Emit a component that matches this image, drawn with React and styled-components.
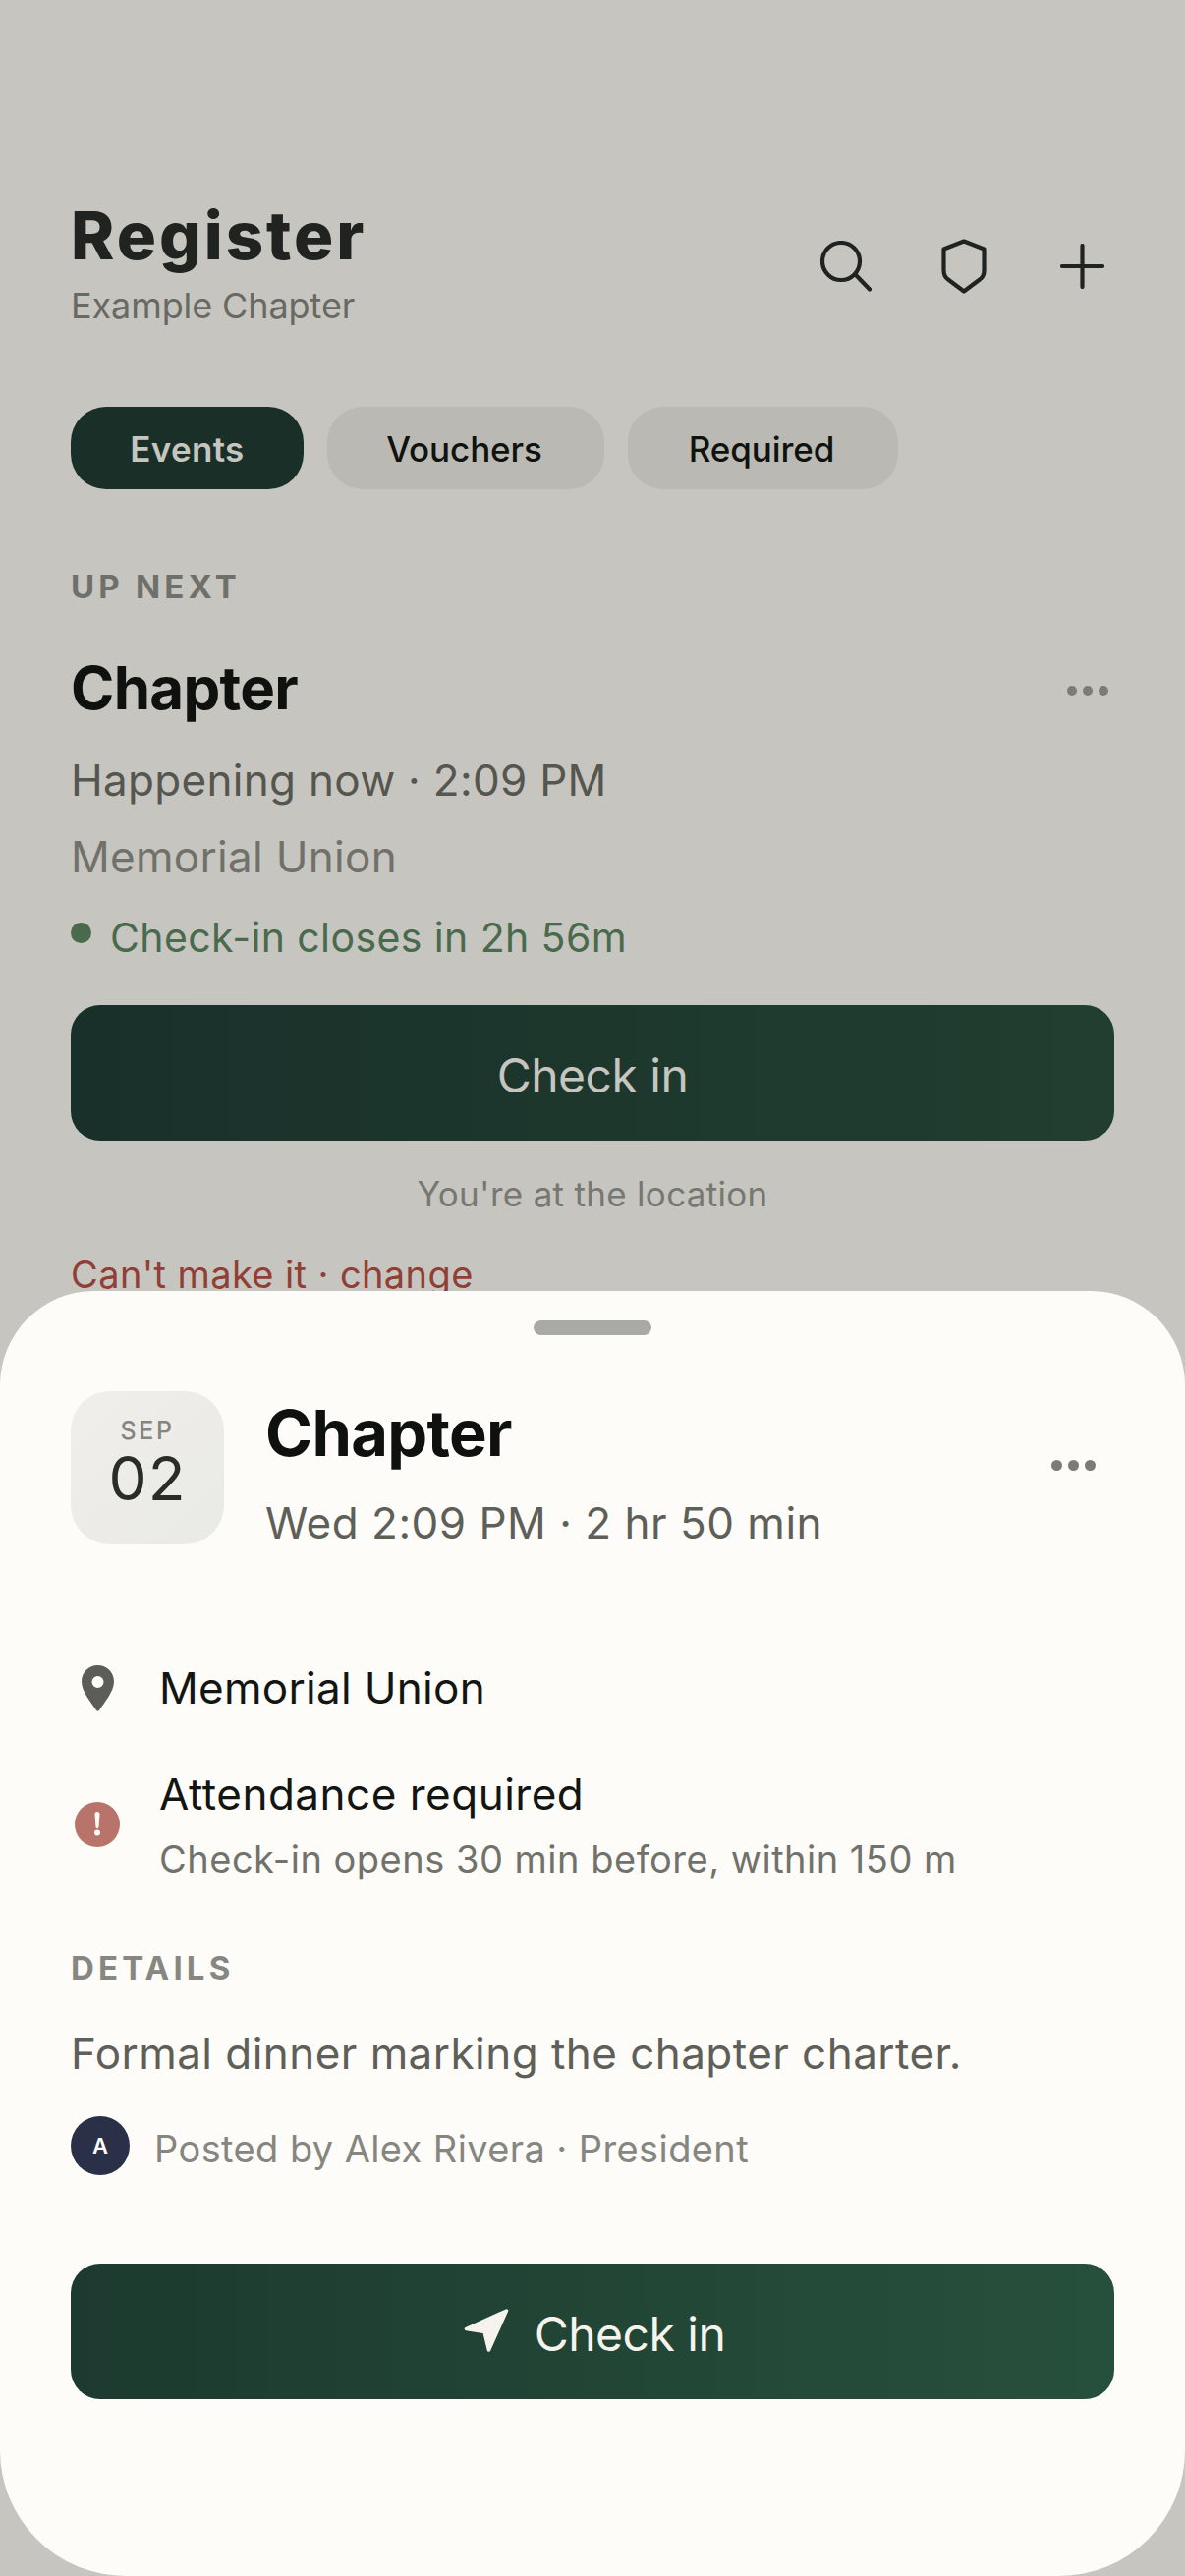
import React from "react"
import styled, { createGlobalStyle } from "styled-components"

const INK = "#131512"
const SHEET = "#fdfcf8"
const FONT = `Inter, "Noto Sans", sans-serif`

const GlobalStyle = createGlobalStyle`
  html, body {
    margin: 0;
    padding: 0;
    background: #c6c5c0;
  }
  * {
    box-sizing: border-box;
  }
`

const Screen = styled.div`
  position: relative;
  width: 1206px;
  height: 2622px;
  overflow: hidden;
  background: #c6c5c0;
  font-family: ${FONT};
`

const Backdrop = styled.main`
  padding: 202px 72px 0;
  display: flex;
  flex-direction: column;
`

const Header = styled.header`
  display: flex;
  justify-content: space-between;
  align-items: flex-start;
  height: 146px;
`

const Title = styled.h1`
  margin: 0;
  font-size: 67px;
  line-height: 76px;
  font-weight: 800;
  letter-spacing: 3px;
  color: #20231f;
`

const Subtitle = styled.div`
  margin-top: 11px;
  font-size: 36px;
  line-height: 44px;
  letter-spacing: -0.1px;
  color: #686963;
`

const HeaderIcons = styled.div`
  display: flex;
  align-items: center;
  gap: 75px;
  margin: 41px 10px 0 0;
  color: #20231f;
  svg:first-child {
    margin-right: -4px;
  }
`

const Tabs = styled.nav`
  display: flex;
  gap: 24px;
  margin-top: 66px;
`

const Tab = styled.div`
  width: ${p => p.$width}px;
  height: 84px;
  padding: 2px ${p => (p.$active ? 0 : 3)}px 0 0;
  border-radius: 36px;
  display: flex;
  align-items: center;
  justify-content: center;
  font-size: 35px;
  font-weight: ${p => (p.$active ? 600 : 500)};
  letter-spacing: ${p => (p.$active ? 0.3 : -0.1)}px;
  background: ${p => (p.$active ? "#1a2f28" : "#bab9b3")};
  color: ${p => (p.$active ? "#c6c5c0" : "#10120f")};
`

const SectionLabel = styled.div`
  font-size: 33px;
  line-height: 40px;
  font-weight: 700;
  letter-spacing: 4.2px;
  margin-top: ${p => p.$top}px;
  color: ${p => p.$color};
`

const EventRow = styled.div`
  display: flex;
  justify-content: space-between;
  align-items: center;
  margin-top: 48px;
  height: 70px;
`

const EventName = styled.h2`
  margin: 0;
  font-size: 60px;
  line-height: 70px;
  font-weight: 700;
  letter-spacing: -0.7px;
  color: #0f110e;
`

const Dots = styled.div`
  display: flex;
  gap: 6px;
  margin: ${p => p.$drop}px ${p => p.$inset}px 0 0;
  span {
    width: ${p => p.$size}px;
    height: ${p => p.$size}px;
    border-radius: 50%;
    background: ${p => p.$color};
  }
`

const Line = styled.div`
  font-size: ${p => p.$size || 44}px;
  line-height: ${p => p.$leading || 54}px;
  letter-spacing: ${p => p.$track ?? 0.3}px;
  margin-top: ${p => p.$top || 0}px;
  color: ${p => p.$color};
`

const ClosesRow = styled.div`
  display: flex;
  align-items: center;
  gap: 19px;
  margin-top: 28px;
`

const GreenDot = styled.span`
  width: 21px;
  height: 21px;
  border-radius: 50%;
  background: #4a6a4d;
  margin-top: -9px;
`

const CheckInButton = styled.div`
  height: ${p => p.$height}px;
  margin-top: ${p => p.$top}px;
  padding: 4px 0 0 ${p => p.$lead || 0}px;
  border-radius: 30px;
  display: flex;
  align-items: center;
  justify-content: center;
  gap: 25px;
  font-size: 48px;
  font-weight: 400;
  letter-spacing: -0.5px;
  background: linear-gradient(90deg, ${p => p.$from}, ${p => p.$to});
  color: ${p => p.$color};
`

const Hint = styled(Line)`
  text-align: center;
`

const Sheet = styled.section`
  position: absolute;
  left: 0;
  right: 0;
  top: 1314px;
  bottom: 0;
  background: ${SHEET};
  border-radius: 96px 96px 128px 128px;
  padding: 30px 72px 0;
`

const Handle = styled.div`
  width: 120px;
  height: 15px;
  margin: 0 auto;
  border-radius: 8px;
  background: #a9aaa4;
`

const SheetHead = styled.div`
  display: flex;
  align-items: stretch;
  height: 156px;
  margin-top: 57px;
`

const DateTile = styled.div`
  width: 156px;
  height: 156px;
  border-radius: 40px;
  flex-shrink: 0;
  display: flex;
  flex-direction: column;
  align-items: center;
  padding-top: 24px;
  background: linear-gradient(135deg, #efeeea, #e9e9e5);
`

const DateMonth = styled.div`
  font-size: 25px;
  line-height: 32px;
  font-weight: 500;
  letter-spacing: 2.6px;
  color: #85867f;
`

const DateDay = styled.div`
  font-size: 62px;
  line-height: 64px;
  font-weight: 400;
  letter-spacing: 1px;
  margin-top: 1px;
  color: #2a2c27;
`

const HeadText = styled.div`
  flex: 1;
  margin-left: 42px;
  padding-top: 5px;
`

const SheetName = styled.h2`
  margin: 0;
  font-size: 65px;
  line-height: 76px;
  font-weight: 700;
  letter-spacing: -0.7px;
  color: #0f110e;
`

const SheetMore = styled.div`
  display: flex;
  align-items: center;
  height: 150px;
`

const InfoRow = styled.div`
  display: flex;
  align-items: center;
  margin-top: ${p => p.$top}px;
`

const InfoIcon = styled.div`
  width: 54px;
  margin: ${p => p.$lift || 0}px 36px 0 0;
  flex-shrink: 0;
  display: flex;
  justify-content: center;
`

const Author = styled.div`
  display: flex;
  align-items: center;
  gap: 25px;
  margin-top: 37px;
`

const Avatar = styled.div`
  width: 60px;
  height: 60px;
  border-radius: 50%;
  display: flex;
  align-items: center;
  justify-content: center;
  font-size: 22px;
  font-weight: 600;
  background: #2a3047;
  color: ${SHEET};
`

const ArrowSvg = styled.svg`
  margin-top: -6px;
`

const SearchIcon = () => (
  <svg width="52" height="52" viewBox="0 0 52 52" fill="none" stroke="currentColor" strokeWidth="4.2" strokeLinecap="round">
    <circle cx="21" cy="21" r="19" />
    <path d="M36.500 35.500L50 49.500" />
  </svg>
)

const ShieldIcon = () => (
  <svg width="46" height="56" viewBox="0 0 46 56" fill="none" stroke="currentColor" strokeWidth="4.2" strokeLinejoin="round">
    <path d="M23 2.500L43.500 10.500V32C43.500 36.500 42 39.500 39 41.500L23 53.500L7 41.500C4 39.500 2.500 36.500 2.500 32V10.500Z" />
  </svg>
)

const PlusIcon = () => (
  <svg width="45" height="46" viewBox="0 0 45 46" fill="none" stroke="currentColor" strokeWidth="4.2" strokeLinecap="round">
    <path d="M22.500 2V44M2 23H43" />
  </svg>
)

const PinIcon = () => (
  <svg width="33" height="47" viewBox="0 0 33 47">
    <path
      fill="#5c5d58"
      fillRule="evenodd"
      d="M16.500 0C7.400 0 0 7.400 0 16.500C0 27 10 38 15 45.800Q16.500 47.500 18 45.800C23 38 33 27 33 16.500C33 7.400 25.600 0 16.500 0ZM16.500 11A6 6 0 1 1 16.500 23A6 6 0 1 1 16.500 11Z"
    />
  </svg>
)

const AlertIcon = () => (
  <svg width="46" height="46" viewBox="0 0 46 46">
    <circle cx="23" cy="23" r="23" fill="#b8746b" />
    <path d="M20.500 12.500A2.500 2.500 0 0 1 25.500 12.500L24.500 25.500A1.500 1.500 0 0 1 21.500 25.500Z" fill={SHEET} />
    <circle cx="23" cy="31.500" r="3" fill={SHEET} />
  </svg>
)

const ArrowIcon = () => (
  <ArrowSvg width="48" height="48" viewBox="0 0 48 48">
    <path
      fill="#f6f3ec"
      stroke="#f6f3ec"
      strokeWidth="3.500"
      strokeLinejoin="round"
      d="M44.500 4L3.500 22.500L22 25.500L26.500 44Z"
    />
  </ArrowSvg>
)

const MoreDots = ({ color, inset = 0, size = 10, drop = 0 }) => (
  <Dots $color={color} $inset={inset} $size={size} $drop={drop}>
    <span />
    <span />
    <span />
  </Dots>
)

const App = () => (
  <Screen>
    <GlobalStyle />
    <Backdrop>
      <Header>
        <div>
          <Title>Register</Title>
          <Subtitle>Example Chapter</Subtitle>
        </div>
        <HeaderIcons>
          <SearchIcon />
          <ShieldIcon />
          <PlusIcon />
        </HeaderIcons>
      </Header>
      <Tabs>
        <Tab $active $width={237}>Events</Tab>
        <Tab $width={282}>Vouchers</Tab>
        <Tab $width={275}>Required</Tab>
      </Tabs>
      <SectionLabel $color="#6f706a" $top={79}>UP NEXT</SectionLabel>
      <EventRow>
        <EventName>Chapter</EventName>
        <MoreDots color="#7b7c76" inset={6} drop={6} />
      </EventRow>
      <Line $color="#55564f" $top={32}>Happening now · 2:09 PM</Line>
      <Line $color="#70716b" $top={24}>Memorial Union</Line>
      <ClosesRow>
        <GreenDot />
        <Line $size={41} $track={0.4} $color="#4a6a4d">Check-in closes in 2h 56m</Line>
      </ClosesRow>
      <CheckInButton $height={138} $top={42} $from="#19302a" $to="#213e30" $color="#c6c5c0">
        Check in
      </CheckInButton>
      <Hint $size={35} $leading={44} $color="#777872" $top={32}>You're at the location</Hint>
      <Line $size={38} $leading={46} $track={0.4} $color="#8f3f36" $top={37}>Can't make it · change</Line>
    </Backdrop>
    <Sheet>
      <Handle />
      <SheetHead>
        <DateTile>
          <DateMonth>SEP</DateMonth>
          <DateDay>02</DateDay>
        </DateTile>
        <HeadText>
          <SheetName>Chapter</SheetName>
          <Line $color="#5e5f59" $top={26} $track={0.5}>Wed 2:09 PM · 2 hr 50 min</Line>
        </HeadText>
        <SheetMore>
          <MoreDots color="#7b7c76" inset={19} size={11} />
        </SheetMore>
      </SheetHead>
      <InfoRow $top={119}>
        <InfoIcon><PinIcon /></InfoIcon>
        <Line $color={INK} $track={0.3}>Memorial Union</Line>
      </InfoRow>
      <InfoRow $top={54}>
        <InfoIcon $lift={-2}><AlertIcon /></InfoIcon>
        <div>
          <Line $color={INK} $track={0.5}>Attendance required</Line>
          <Line $size={38} $leading={48} $track={0.5} $color="#71726c" $top={15}>Check-in opens 30 min before, within 150 m</Line>
        </div>
      </InfoRow>
      <SectionLabel $color="#868780" $top={67}>DETAILS</SectionLabel>
      <Line $color="#5e5f59" $top={40} $track={0.45}>Formal dinner marking the chapter charter.</Line>
      <Author>
        <Avatar>A</Avatar>
        <Line $size={38} $leading={48} $track={0.4} $top={6} $color="#85867f">Posted by Alex Rivera · President</Line>
      </Author>
      <CheckInButton $height={138} $top={90} $lead={3} $from="#1c3a2f" $to="#27503c" $color="#f6f3ec">
        <ArrowIcon />
        Check in
      </CheckInButton>
    </Sheet>
  </Screen>
)

export default App
